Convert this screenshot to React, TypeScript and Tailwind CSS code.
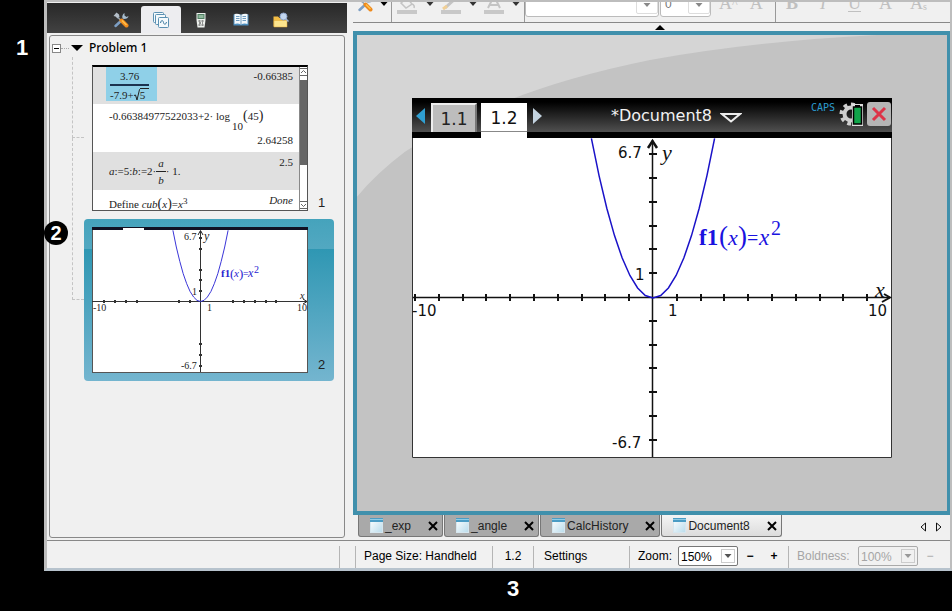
import { useState } from "react";

const documents = [
    { name: "_exp" },
    { name: "_angle" },
    { name: "CalcHistory" },
    { name: "Document8" },
];

const sideTabs = [
    { name: "Document Tools", Icon: ToolsIcon },
    { name: "Page Sorter", Icon: PagesIcon },
    { name: "TI-SmartView", Icon: HandheldIcon },
    { name: "Utilities", Icon: BookIcon },
    { name: "Content Explorer", Icon: FolderIcon },
];

// points of y = x^2 around the origin (cx, cy), one unit is `unit` pixels
function parabola(cx: number, cy: number, unit: number, maxX: number) {
    const points = [];
    for (let i = -8; i <= 8; i++) {
        const x = (i / 8) * maxX;
        points.push(`${(cx + x * unit).toFixed(1)},${(cy - x * x * unit).toFixed(1)}`);
    }
    return points.join(" ");
}

function ToolsIcon() {
    return (
        <svg width="16" height="16" viewBox="0 0 16 16" fill="none">
            <path d="M0.500 4 L3.500 0.500 L6 2.500 L6.500 5 L4.500 6.500 L2.500 4.500 Z" fill="#b4bec8" />
            <path d="M9 8 L2.500 14" stroke="#7d9fc4" strokeWidth="2.500" strokeLinecap="round" />
            <path d="M11.500 1 Q8.500 3 9.500 6.500 L11 7 Q15 7 15.500 4 L13.500 5 L11.500 3.500 Z" fill="#a7bccd" />
            <path d="M5 5.500 L8 8.500" stroke="#98a5b0" strokeWidth="1.500" />
            <path d="M8.500 8.500 L13.500 13.500" stroke="#ee8a1d" strokeWidth="4" strokeLinecap="round" />
            <path d="M9 8.500 L13.500 13" stroke="#ffc04a" strokeWidth="1.500" />
        </svg>
    );
}

function PagesIcon() {
    return (
        <svg width="16" height="16" viewBox="0 0 16 16" fill="#f4f9fc" stroke="#5b90b2">
            <rect x="0.500" y="0.500" width="10" height="10" rx="1" />
            <rect x="2.500" y="2.500" width="10" height="10" rx="1" />
            <rect x="5.500" y="5.500" width="10" height="10" rx="1" />
            <path d="M7.500 11 C8.500 7 10 8.500 10.500 10.500 S12.500 13.500 13.500 10" fill="none" stroke="#35749c" />
        </svg>
    );
}

function HandheldIcon() {
    return (
        <svg width="16" height="16" viewBox="0 0 16 16">
            <path d="M3.500 1 H12.500 V8 L11.500 15.500 H4.500 L3.500 8 Z" fill="#eef1ee" />
            <rect x="5" y="2.500" width="6" height="4" fill="#8fb79c" stroke="#4f7f62" />
            <path d="M5.500 9 H10.500 M6 11 H10 M5.500 13 H10.500" stroke="#333" strokeDasharray="2 1" />
        </svg>
    );
}

function BookIcon() {
    return (
        <svg width="16" height="16" viewBox="0 0 16 16">
            <path d="M0.500 2.500 H15.500 V13.500 H0.500 Z" fill="#4d8fc0" />
            <path d="M1.500 2 Q5 1 8 3 Q11 1 14.500 2 V12 Q11 11 8 12.500 Q5 11 1.500 12 Z" fill="#f3f8fb" />
            <path d="M8 3 V12.500 M3 4.500 H6.500 M3 6.500 H6.500 M3 8.500 H6.500 M9.500 4.500 H13 M9.500 6.500 H13 M9.500 8.500 H13" stroke="#6f9cc0" fill="none" />
        </svg>
    );
}

function FolderIcon() {
    return (
        <svg width="16" height="16" viewBox="0 0 16 16">
            <path d="M0.500 4.500 H5 L6.500 6 H14 V14.500 H0.500 Z" fill="#f3bd45" />
            <path d="M1 8.500 H14 V15 H1 Z" fill="#fde58e" stroke="#e5aa35" strokeWidth="0.500" />
            <circle cx="10.500" cy="4.500" r="3.500" fill="#c3d6ee" stroke="#8ca2c6" />
            <path d="M13 7 L15.500 9.500" stroke="#9fb3d2" strokeWidth="1.500" />
        </svg>
    );
}

function DocIcon() {
    return (
        <svg width="13" height="15" viewBox="0 0 13 15">
            <defs>
                <linearGradient id="docPaper" x1="0" y1="0" x2="1" y2="1">
                    <stop offset="0" stopColor="#ffffff" />
                    <stop offset="1" stopColor="#b9dcec" />
                </linearGradient>
            </defs>
            <rect x="0.500" y="0.500" width="12" height="14" fill="url(#docPaper)" stroke="#d6e6ee" />
            <rect x="0" y="0" width="13" height="4" fill="#4b9cc4" />
            <rect x="0" y="1" width="13" height="1" fill="#8fcbe4" />
        </svg>
    );
}

function Caret({ color = "#000000" }: { color?: string }) {
    return (
        <svg width="8" height="4" viewBox="0 0 8 4" fill={color}>
            <path d="M0.500 0 H7.500 L4 4 Z" />
        </svg>
    );
}

function Fraction({ top, bottom }: { top: React.ReactNode; bottom: React.ReactNode }) {
    return (
        <span className="inline-flex flex-col items-center leading-3">
            <span className="px-[2px]">{top}</span>
            <span className="my-[2px] h-px w-full bg-[#222]"></span>
            <span className="px-[2px]">{bottom}</span>
        </span>
    );
}

{/* preview of the calculator page */}
function CalculatorPage() {
    return (
        <div className="flex h-[146px] w-[216px] shrink-0 overflow-hidden border border-t-2 border-[#555] border-t-black bg-white font-['Liberation_Serif',serif] text-[11px] leading-3 text-[#222]">
            <div className="flex min-w-0 flex-1 flex-col">
                <div className="flex h-[37px] shrink-0 justify-between bg-[#e0e0e0] pr-1.5 pl-[13px]">
                    <div className="h-[34px] bg-[#8fd0e8] pt-[3px] pr-2 pl-1">
                        <span className="inline-flex flex-col items-center leading-3">
                            <span>3.76</span>
                            <span className="my-[2px] h-[2px] w-full bg-[#1c3350]"></span>
                            <span className="flex items-center">
                                -7.9+
                                <svg width="6" height="13" viewBox="0 0 6 13" fill="none" stroke="#222">
                                    <path d="M0 7.500 L1.500 7 L3 12 L5.500 1.500 H6" />
                                </svg>
                                <span className="border-t border-[#222] pr-1">5</span>
                            </span>
                        </span>
                    </div>
                    <span className="pt-[3px]">-0.66385</span>
                </div>
                <div className="flex h-12 shrink-0 flex-col justify-between pt-1.5 pr-1.5 pb-1.5 pl-4">
                    <span className="flex items-start whitespace-nowrap">
                        -0.66384977522033+2· log
                        <span className="pt-2.5 pl-[2px] leading-3">10</span>
                        <span className="text-sm leading-3">(</span>45<span className="text-sm leading-3">)</span>
                    </span>
                    <span className="self-end">2.64258</span>
                </div>
                <div className="flex h-[38px] shrink-0 justify-between bg-[#e0e0e0] pr-1.5 pl-4">
                    <span className="flex items-center">
                        <i>a</i>:=5:<i>b</i>:=2·<Fraction top={<i>a</i>} bottom={<i>b</i>} />· 1.
                    </span>
                    <span className="pt-1">2.5</span>
                </div>
                <div className="flex justify-between pr-1.5 pl-4">
                    <span className="pt-2">
                        Define <i>cub</i><span className="text-sm leading-3">(</span><i>x</i><span className="text-sm leading-3">)</span>=<i>x</i><sup className="text-[9px]">3</sup>
                    </span>
                    <i className="pt-1">Done</i>
                </div>
            </div>
            <div className="flex w-2 flex-col items-center justify-between border-l border-[#888] bg-white py-px">
                <svg width="7" height="8" viewBox="0 0 7 8" fill="none" stroke="#666"><path d="M0 0.500 H7 M0 7.500 H7 M1 5 L3.500 2.500 L6 5" /></svg>
                <div className="mt-1 h-[85px] w-full bg-[#666]"></div>
                <div className="flex-1"></div>
                <svg width="7" height="8" viewBox="0 0 7 8" fill="none" stroke="#666"><path d="M0 0.500 H7 M0 7.500 H7 M1 3 L3.500 5.500 L6 3" /></svg>
            </div>
        </div>
    );
}

{/* preview of the graph page */}
function GraphPreview() {
    const xTicks = [11, 22, 33, 44, 86, 97, 140, 151, 162, 173, 183];
    const yTicks = [10, 21, 42, 52, 63, 116, 127, 138];
    return (
        <svg className="shrink-0" width="216" height="146" viewBox="0 0 216 146" fontFamily="'Liberation Serif', serif" fontSize="10" fill="#222">
            <rect x="0.500" y="0.500" width="215" height="145" fill="#fff" stroke="#555" />
            <rect width="216" height="3" fill="#111122" />
            <rect x="31" y="1" width="21" height="2" fill="#fff" />
            <path d="M0 74.500 H215 M108.500 4 V145" stroke="#333" />
            <path d="M106 8 L108.500 3.500 L111 8 M211 72 L215 74.500 L211 77" fill="none" stroke="#222" />
            {xTicks.map((x) => <rect key={x} x={x} y="73" width="2" height="3" fill="#333" />)}
            {yTicks.map((y) => <rect key={y} x="107" y={y} width="3" height="2" fill="#333" />)}
            <polyline points={parabola(108.5, 74.5, 10.7, 2.58)} fill="none" stroke="#3a35d8" />
            <text x="92" y="13">6.7</text>
            <text x="112" y="13" fontStyle="italic" fontSize="12">y</text>
            <text x="100" y="68">1</text>
            <text x="1" y="84">-10</text>
            <text x="115" y="84">1</text>
            <text x="205" y="84">10</text>
            <text x="208" y="72" fontStyle="italic">x</text>
            <text x="89" y="142">-6.7</text>
            <g fill="#2a24d0">
                <text x="129" y="50" fontSize="11" fontWeight="bold">f1</text>
                <text x="138" y="51" fontSize="13">(</text>
                <text x="142" y="50" fontSize="11" fontStyle="italic">x</text>
                <text x="147" y="51" fontSize="13">)</text>
                <text x="151" y="50">=</text>
                <text x="156" y="50" fontSize="12" fontStyle="italic">x</text>
                <text x="162" y="46">2</text>
            </g>
        </svg>
    );
}

{/* the graph on the open page */}
function Graph() {
    const cx = 241;
    const cy = 159;
    const xTicks = [-10, -9, -8, -7, -6, -5, -4, -3, -2, -1, 1, 2, 3, 4, 5, 6, 7, 8, 9];
    const yTicks = [-6, -5, -4, -3, -2, -1, 1, 2, 3, 4, 5, 6];
    return (
        <svg className="block w-full" viewBox="0 0 480 320" fontFamily="'DejaVu Sans', sans-serif" fontSize="15" fill="#111">
            <rect width="480" height="320" fill="#fff" />
            <path d="M0.500 0 V319.500 H479.500 V0" fill="none" stroke="#333" />
            <path d="M1 159.500 H478 M240.500 2 V319" stroke="#111" strokeWidth="1.500" />
            {xTicks.map((n) => <path key={n} d={`M${Math.round(cx + n * 23.8)} 156 v7`} stroke="#111" strokeWidth="2" />)}
            {yTicks.map((n) => <path key={n} d={`M237 ${Math.round(cy - n * 23.8)} h8`} stroke="#111" strokeWidth="2" />)}
            <path d="M236 10 L240.500 3 L245 10" fill="none" stroke="#111" strokeWidth="2.500" />
            <path d="M470 164 L478 159.500 L472 156" fill="none" stroke="#111" strokeWidth="2" />
            <polyline points={parabola(cx, cy + 1, 23.8, 2.59)} fill="none" stroke="#1a12c8" strokeWidth="1.500" />
            <text x="206" y="20">6.7</text>
            <text x="223" y="142">1</text>
            <text x="0" y="178">-10</text>
            <text x="256" y="178">1</text>
            <text x="456" y="178">10</text>
            <text x="200" y="310">-6.7</text>
            <g fontFamily="'Liberation Serif', serif" fontSize="22" fontStyle="italic">
                <text x="250" y="22">y</text>
                <text x="463" y="159">x</text>
            </g>
            <g fontFamily="'Liberation Serif', serif" fontSize="23" fill="#1a12e0">
                <text x="287" y="107" fontWeight="bold">f1</text>
                <text x="307" y="107" fontSize="27">(</text>
                <text x="316" y="107" fontSize="22" fontStyle="italic">x</text>
                <text x="326" y="107" fontSize="27">)</text>
                <text x="335" y="107" fontSize="20">=</text>
                <text x="347" y="107" fontStyle="italic">x</text>
                <text x="359" y="97" fontSize="20">2</text>
            </g>
        </svg>
    );
}

function Handheld() {
    return (
        <div className="w-[480px] max-w-full bg-black">
            <div className="flex h-10 items-start bg-[linear-gradient(#000_4px,#505050_34px,#000_34px)] pt-1 pl-1 font-['DejaVu_Sans',sans-serif]">
                <button aria-label="Previous page" className="mt-1.5 mr-1.5">
                    <svg width="9" height="16" viewBox="0 0 9 16" fill="#2f9fd2"><path d="M9 0 V16 L0 8 Z" /></svg>
                </button>
                <button className="mt-px h-[29px] w-[46px] border-2 border-b-0 border-[#eee] border-r-[#777] bg-[#bdbdbd] text-[17px] leading-6 text-[#222]">1.1</button>
                <button className="mt-px ml-1 h-[35px] w-[46px] border-b-[6px] border-white bg-white text-[17px] leading-7 text-[#111] shadow-[inset_0_-1px_0_#888]">1.2</button>
                <button aria-label="Next page" className="mt-1.5 ml-1.5">
                    <svg width="9" height="16" viewBox="0 0 9 16" fill="#c3d3e0"><path d="M0 0 V16 L9 8 Z" /></svg>
                </button>
                <div className="flex flex-1 items-center justify-center gap-2 text-base leading-7 text-[#f2f2f2]">
                    *Document8
                    <svg className="mt-1" width="22" height="10" viewBox="0 0 22 10" fill="none" stroke="#eee" strokeWidth="2"><path d="M2 1 H20 L11 8.500 Z" /></svg>
                </div>
                <span className="mr-1 font-['DejaVu_Sans_Mono',monospace] text-[10px] leading-3 text-[#2b9bd0]">CAPS</span>
                <svg width="24" height="26" viewBox="0 0 24 26">
                    <circle cx="12" cy="12" r="9.500" fill="none" stroke="#cfcfcf" strokeWidth="4" strokeDasharray="3.700 3.700" />
                    <circle cx="12" cy="12" r="6.500" fill="none" stroke="#cfcfcf" strokeWidth="4" />
                    <rect x="13" y="2" width="11" height="22" fill="#ddd" />
                    <rect x="14.500" y="5" width="8" height="17" fill="#10a54a" stroke="#000" strokeWidth="1.500" />
                    <rect x="16" y="3" width="5" height="2" fill="#000" />
                </svg>
                <button aria-label="Close document" className="mr-px ml-1 rounded-[3px] bg-[#b5b5b5]">
                    <svg width="24" height="24" viewBox="0 0 24 24" stroke="#dd3347" strokeWidth="3"><path d="M6 6 L18 18 M18 6 L6 18" /></svg>
                </button>
            </div>
            <Graph />
        </div>
    );
}

function Toolbar() {
    return (
        <div className="flex h-[21px] shrink-0 items-end overflow-hidden border-b border-[#888] font-['Liberation_Serif',serif] text-lg leading-5 text-[#c0c0c0]">
            <div className="flex h-[30px] w-[39px] items-start justify-between border-r border-[#999] pt-1 pr-[3px] pl-1">
                <button aria-label="Insert"><ToolsIcon /></button>
                <span className="pt-1.5"><Caret /></span>
            </div>
            <div className="flex h-[30px] w-[133px] items-start justify-between border-r border-[#999] pt-[3px] pr-1 pl-1">
                <button aria-label="Fill color">
                    <svg width="22" height="20" viewBox="0 0 22 20" fill="none" stroke="#c4c4c4" strokeWidth="1.500"><path d="M5 8 L11 3 L16 9 L10 13 Z M16 9 Q19 10 18 13" /><rect x="1" y="15" width="20" height="4" fill="#c8c8c8" stroke="none" /></svg>
                </button>
                <span className="pt-[7px]"><Caret color="#333" /></span>
                <button aria-label="Line color">
                    <svg width="20" height="20" viewBox="0 0 20 20" fill="none"><path d="M4 13 L15 3" stroke="#c4c4c4" strokeWidth="3" /><path d="M2 14 L6 11" stroke="#f0cf96" strokeWidth="3" /><rect x="0" y="15" width="20" height="4" fill="#c8c8c8" /></svg>
                </button>
                <span className="pt-[7px]"><Caret color="#333" /></span>
                <button aria-label="Text color">
                    <svg width="20" height="20" viewBox="0 0 20 20" fill="none" stroke="#c4c4c4" strokeWidth="2"><path d="M4 13 L10 1 L16 13 M6 10 H14" /><rect x="0" y="15" width="20" height="4" fill="#c8c8c8" stroke="none" /></svg>
                </button>
                <span className="pt-[7px]"><Caret color="#333" /></span>
            </div>
            <div className="flex gap-px pb-[5px]">
                <button aria-label="Font" className="flex h-6 w-[134px] justify-end rounded-[3px] border border-[#bbb] bg-white">
                    <span className="flex h-5 w-[22px] justify-center rounded-[2px] border border-[#ddd] pt-2"><Caret color="#888" /></span>
                </button>
                <button aria-label="Font size" className="flex h-6 w-[51px] justify-between rounded-[3px] border border-[#bbb] bg-white pl-1 font-['Liberation_Sans',sans-serif] text-xs leading-5 text-[#777]">
                    0
                    <span className="flex h-5 w-[22px] justify-center rounded-[2px] border border-[#ddd] pt-2"><Caret color="#888" /></span>
                </button>
            </div>
            <div className="flex h-[30px] w-[65px] items-start gap-3 border-r border-[#999] pt-px pl-2">
                <button aria-label="Increase font size" className="flex">A<span className="text-xs leading-5">^</span></button>
                <button aria-label="Decrease font size" className="flex">A<span className="text-xs leading-5">ˇ</span></button>
            </div>
            <div className="flex h-[30px] flex-1 items-start gap-[18px] pt-px pl-2.5">
                <button aria-label="Bold" className="font-bold">B</button>
                <button aria-label="Italic" className="px-1 italic">I</button>
                <button aria-label="Underline" className="underline underline-offset-2">U</button>
                <button aria-label="Superscript">A</button>
                <button aria-label="Subscript" className="flex">A<span className="text-[10px] leading-7">s</span></button>
            </div>
        </div>
    );
}

export default function App() {
    const [activeSideTab, setActiveSideTab] = useState("Page Sorter");
    const [activeDoc, setActiveDoc] = useState("Document8");

    return (
        <div className="flex min-h-screen flex-col bg-black font-['Liberation_Sans',sans-serif] text-xs text-[#222]">
            <div className="flex flex-1">
                <div className="w-11 shrink-0 pt-9 text-center text-[22px] leading-6 font-bold text-white">1</div>

                <div className="relative flex min-w-0 flex-1 flex-col border-t-2 border-r-2 border-b-[3px] border-l-[3px] border-[#bdbdbd] border-b-[#b7c3cd] bg-[#f0f0f0]">
                    <div className="flex flex-1">
                        {/* side panel */}
                        <div className="mr-1.5 flex w-[300px] shrink-0 flex-col">
                            <div className="mt-px flex h-[30px] items-end justify-center bg-linear-to-b from-[#282828] to-[#424242] pl-2">
                                {sideTabs.map(({ name, Icon }) => (
                                    <button
                                        key={name}
                                        aria-label={name}
                                        onClick={() => setActiveSideTab(name)}
                                        className={`flex h-[27px] w-10 items-center justify-center rounded-t-[3px] ${activeSideTab == name ? "bg-[#ededf0]" : ""}`}
                                    >
                                        <Icon />
                                    </button>
                                ))}
                            </div>
                            <div className="mx-[2px] mt-[2px] mb-[2px] flex-1 rounded-[3px] border border-[#888] font-['Noto_Sans',sans-serif]">
                                <div className="flex h-[21px] items-center pt-[3px] pl-[2px] font-medium text-black">
                                    <button aria-label="Collapse" className="flex h-[9px] w-[9px] items-center justify-center border border-[#888] bg-white">
                                        <span className="h-px w-[5px] bg-black"></span>
                                    </button>
                                    <span className="mr-[2px] w-2 border-t border-dotted border-[#aaa]"></span>
                                    <svg width="12" height="6" viewBox="0 0 12 6"><path d="M0 0 H12 L6 6 Z" /></svg>
                                    <span className="pl-1.5">Problem 1</span>
                                </div>
                                <div className="flex pl-[22px]">
                                    <div className="w-3 shrink-0">
                                        <div className="h-[81px] border-b border-l border-dashed border-[#c4c4c4]"></div>
                                        <div className="h-[162px] border-b border-l border-dashed border-[#c4c4c4]"></div>
                                    </div>
                                    <div className="font-['Liberation_Sans',sans-serif] text-[13px] leading-4">
                                        <div className="flex w-[250px] items-end gap-2.5 p-2">
                                            <CalculatorPage />
                                            <span>1</span>
                                        </div>
                                        <div className="flex w-[250px] items-end gap-2.5 rounded-[4px] bg-[linear-gradient(#45a3bc,#52a8c1_30px,#2f97b3_30px,#74b5cf)] p-2">
                                            <GraphPreview />
                                            <span>2</span>
                                        </div>
                                    </div>
                                </div>
                            </div>
                        </div>

                        {/* toolbar, open page and document tabs */}
                        <div className="flex min-w-0 flex-1 flex-col">
                            <Toolbar />
                            <button aria-label="Hide toolbar" className="flex h-2 shrink-0 items-center justify-center pl-4">
                                <svg width="10" height="5" viewBox="0 0 10 5"><path d="M0 5 H10 L5 0 Z" /></svg>
                            </button>
                            <div className="relative flex flex-1 items-center justify-center border-4 border-r-[3px] border-[#4090ac] bg-[#c3c3c3] pt-2.5">
                                <svg className="absolute inset-0 h-full w-full" viewBox="0 0 590 477" preserveAspectRatio="none">
                                    <path d="M0 0 H520 Q400 6 293 25 Q210 42 150 66 Q90 90 48 117 Q20 138 0 162 Z" fill="#d5d5d5" />
                                </svg>
                                <div className="relative">
                                    <Handheld />
                                </div>
                            </div>
                            <div className="flex h-[25px] shrink-0 items-start pl-[5px]">
                                {documents.map((doc) => (
                                    <div
                                        key={doc.name}
                                        className={`mr-px flex h-[22px] items-center rounded-b-[3px] border border-t-0 border-[#777] pr-1 pl-[11px] ${activeDoc == doc.name ? "bg-linear-to-b from-[#f4f4f4] to-[#dcdcdc]" : "bg-[#a9a9a9]"}`}
                                    >
                                        <button onClick={() => setActiveDoc(doc.name)} className="flex items-center gap-[2px]">
                                            <DocIcon />
                                            {doc.name}
                                        </button>
                                        <button aria-label={`Close ${doc.name}`} className="ml-[17px]">
                                            <svg width="10" height="10" viewBox="0 0 10 10" stroke="#000" strokeWidth="2"><path d="M1 1 L9 9 M9 1 L1 9" /></svg>
                                        </button>
                                    </div>
                                ))}
                                <div className="ml-auto flex h-6 items-center gap-2.5 pr-2">
                                    <button aria-label="Scroll tabs left"><svg width="6" height="10" viewBox="0 0 6 10" fill="none" stroke="#111"><path d="M5.500 1 V9 L1 5 Z" /></svg></button>
                                    <button aria-label="Scroll tabs right"><svg width="6" height="10" viewBox="0 0 6 10" fill="none" stroke="#111"><path d="M0.500 1 V9 L5 5 Z" /></svg></button>
                                </div>
                            </div>
                        </div>
                    </div>

                    {/* status bar */}
                    <div className="flex h-7 shrink-0 items-end border-t border-[#888] bg-[#f1f1f1] text-black *:h-[22px] *:shrink-0">
                        <div className="w-[293px] border-r border-[#b5b5b5]"></div>
                        <div className="w-4 border-r border-[#b5b5b5]"></div>
                        <div className="w-[137px] border-r border-[#b5b5b5] pl-2 leading-5">Page Size: Handheld</div>
                        <div className="w-[41px] border-r border-[#b5b5b5] text-center leading-5">1.2</div>
                        <button className="w-24 border-r border-[#b5b5b5] pb-[2px] pl-2.5 text-left leading-5">Settings</button>
                        <div className="flex w-[159px] items-start border-r border-[#b5b5b5] pl-2 leading-5">
                            <label htmlFor="zoom" className="w-10">Zoom:</label>
                            <div className="relative">
                                <select id="zoom" className="h-5 w-[60px] appearance-none rounded-[2px] border border-[#777] bg-white pl-[2px]">
                                    <option>150%</option>
                                </select>
                                <span className="pointer-events-none absolute top-[3px] right-[3px] flex h-3.5 w-3.5 items-center justify-center border border-[#ccc]"><Caret color="#555" /></span>
                            </div>
                            <button aria-label="Zoom out" className="ml-2 h-5 w-2 font-bold">−</button>
                            <button aria-label="Zoom in" className="ml-4 h-5 w-2 font-bold">+</button>
                        </div>
                        <div className="flex items-start pl-2 leading-5 text-[#a5a5a5]">
                            <label htmlFor="boldness" className="w-[61px]">Boldness:</label>
                            <div className="relative">
                                <select id="boldness" disabled className="h-5 w-[60px] appearance-none rounded-[2px] border border-[#aaa] bg-[#f1f1f1] pl-[2px] opacity-100">
                                    <option>100%</option>
                                </select>
                                <span className="pointer-events-none absolute top-[3px] right-[3px] flex h-3.5 w-3.5 items-center justify-center border border-[#ccc]"><Caret color="#999" /></span>
                            </div>
                            <button aria-label="Less bold" disabled className="ml-2 h-5 w-2">−</button>
                        </div>
                    </div>

                    {/* callout on the edge of the side panel */}
                    <span className="absolute top-[219px] -left-[3px] flex h-6 w-6 items-center justify-center rounded-full bg-black text-xl font-bold text-white">2</span>
                </div>
            </div>
            <div className="h-10 pt-1.5 pl-[74px] text-center text-[22px] leading-6 font-bold text-white">3</div>
        </div>
    );
}
